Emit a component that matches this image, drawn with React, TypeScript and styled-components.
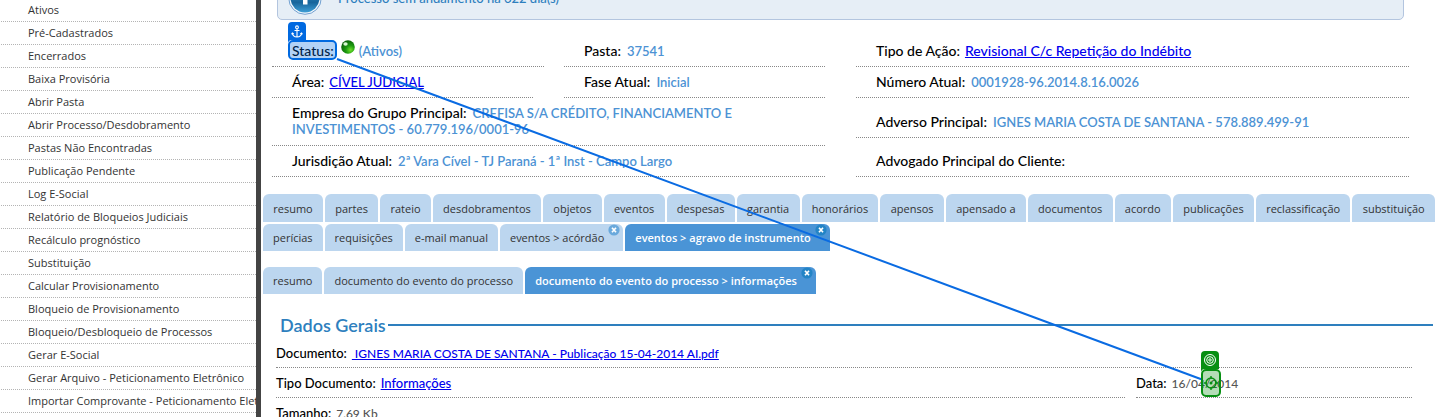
import React from 'react';
import styled, { createGlobalStyle } from 'styled-components';

const uiFont = '"Open Sans", "Noto Sans", sans-serif';
const bodyFont = 'Lato, "Open Sans", sans-serif';

const GlobalStyle = createGlobalStyle`
  * { box-sizing: border-box; }
  body { margin: 0; background: #fff; overflow: hidden; }
`;

const Page = styled.div`
  position: relative;
  display: flex;
  height: 100vh;
  overflow: hidden;
  font-family: ${bodyFont};
`;

const Sidebar = styled.nav`
  flex: 0 0 261px;
  border-right: 5px solid #444;
  overflow: hidden;
`;

const Menu = styled.ul`
  list-style: none;
  margin: -1px 0 0;
  padding: 0 0 0 1px;
`;

const MenuItem = styled.li`
  height: 23px;
  border-bottom: 1px dotted #b4b4b4;
`;

const MenuLink = styled.a`
  display: block;
  padding-left: 27px;
  font: 400 11px/22px ${uiFont};
  color: #333;
  white-space: nowrap;
  text-decoration: none;
`;

const Main = styled.main`
  flex: 1;
  min-width: 0;
`;

const Alert = styled.div`
  display: flex;
  align-items: center;
  gap: 16px;
  height: 44px;
  margin: -24px 36px 16px 16px;
  padding-left: 10px;
  background: #e6eef6;
  border: 1px solid #b3c5df;
  border-radius: 5px;
  font-size: 13px;
  font-weight: 500;
  line-height: 17px;
  color: #2e7fbe;
`;

const Summary = styled.section`
  display: grid;
  grid-template-columns: 1fr 1fr;
  column-gap: 31px;
  padding: 0 31px 0 11px;
  font-size: 14px;
  font-weight: 500;
  line-height: 17px;
`;

const Column = styled.div`
  display: flex;
  flex-direction: column;
`;

const Pair = styled.div<{ $wideFirst?: boolean }>`
  display: grid;
  grid-template-columns: ${p => (p.$wideFirst ? '272fr 261fr' : '1fr 1fr')};
  column-gap: ${p => (p.$wideFirst ? '20px' : '31px')};
`;

const Field = styled.div<{ $grow?: boolean }>`
  display: flex;
  flex: ${p => (p.$grow ? '1' : 'none')};
  flex-direction: column;
  justify-content: flex-end;
  padding: 6px 20px 7px;
  border-bottom: 1px dotted #888;
  color: #000;
`;

const Line = styled.div`
  display: flex;
  align-items: baseline;
  height: 17px;
  white-space: nowrap;
`;

const Value = styled.span<{ $flush?: boolean }>`
  margin-left: ${p => (p.$flush ? '0' : '6px')};
  font-size: 13px;
  font-weight: 600;
  color: #4c92d4;
`;

const Link = styled.a<{ $size?: number }>`
  margin-left: 5px;
  font-size: ${p => p.$size ?? 13}px;
  color: #00e;
  text-decoration: underline;
`;

const StatusDot = styled.svg`
  flex: none;
  align-self: flex-start;
  margin: -3px -3px 0 6px;
`;

const Tabs = styled.div<{ $fill?: boolean; $last?: boolean }>`
  display: flex;
  gap: 2px;
  height: ${p => (p.$fill ? '28px' : '27px')};
  margin: 0 5px ${p => (p.$last ? '16px' : '2px')} 2px;
  & > button { flex-grow: ${p => (p.$fill ? 1 : 0)}; }
`;

const TabArea = styled.div`
  padding-top: 17px;
`;

const Tab = styled.button<{ $active?: boolean; $closable?: boolean }>`
  position: relative;
  border: 0;
  border-radius: 6px 6px 0 0;
  padding: 0 ${p => (p.$closable ? '19px' : '10px')} 0 10px;
  background: ${p => (p.$active ? '#4a94d6' : '#bcd6ef')};
  color: ${p => (p.$active ? '#fff' : '#333')};
  font: ${p => (p.$active ? 600 : 500)} 11px/27px ${uiFont};
  white-space: nowrap;
`;

const CloseMark = styled.svg`
  position: absolute;
  top: 0;
  right: 3px;
`;

const SectionTitle = styled.h2`
  display: flex;
  align-items: center;
  gap: 2px;
  margin: 20px 7px 2px 19px;
  font-size: 18px;
  line-height: 22px;
  font-weight: 600;
  color: #2e7fbe;
  &::after {
    content: '';
    flex: 1;
    height: 2px;
    background: #2e7fbe;
  }
`;

const Details = styled.section`
  padding: 0 28px 0 15px;
  font-size: 13px;
  font-weight: 500;
  line-height: 17px;
`;

const DetailRow = styled.div`
  display: flex;
  gap: 11px;
`;

const Detail = styled.div<{ $narrow?: boolean }>`
  flex: ${p => (p.$narrow ? '0 0 276px' : '1')};
  height: 30px;
  padding: 7px 0 5px;
  border-bottom: 1px dotted #888;
  color: #000;
`;

const Muted = styled.span`
  margin-left: 5px;
  font-size: 12px;
  color: #555;
`;

const Overlay = styled.svg`
  position: absolute;
  top: 0;
  left: 0;
  pointer-events: none;
`;

const menu = [
  'Ativos', 'Pré-Cadastrados', 'Encerrados', 'Baixa Provisória', 'Abrir Pasta',
  'Abrir Processo/Desdobramento', 'Pastas Não Encontradas', 'Publicação Pendente',
  'Log E-Social', 'Relatório de Bloqueios Judiciais', 'Recálculo prognóstico',
  'Substituição', 'Calcular Provisionamento', 'Bloqueio de Provisionamento',
  'Bloqueio/Desbloqueio de Processos', 'Gerar E-Social',
  'Gerar Arquivo - Peticionamento Eletrônico',
  'Importar Comprovante - Peticionamento Eletrônico',
];

const mainTabs = [
  'resumo', 'partes', 'rateio', 'desdobramentos', 'objetos', 'eventos', 'despesas',
  'garantia', 'honorários', 'apensos', 'apensado a', 'documentos', 'acordo',
  'publicações', 'reclassificação', 'substituição',
];

function Close({ active }: { active?: boolean }) {
  return (
    <CloseMark width="12" height="12" viewBox="0 0 12 12" aria-hidden="true">
      <circle cx="6" cy="6" r="5.6" fill={active ? '#2384c6' : '#6aa9dc'} />
      <path d="M4 3.8 8 8.2M8 3.8 4 8.2" stroke="#fff" strokeWidth="1.7" />
    </CloseMark>
  );
}

function Connector() {
  return (
    <Overlay width="1440" height="417" viewBox="0 0 1440 417" aria-hidden="true">
      <path d="M337 59 1202 379.500" stroke="#0a6be2" strokeWidth="2" />
      <rect x="289" y="41" width="47" height="18" rx="4" fill="#0069e0" fillOpacity=".3" stroke="#0069e0" strokeWidth="2" />
      <path d="M288 44V26q0-4 4-4h10q4 0 4 4v14h-14q-4 0-4 4z" fill="#0069e0" />
      <g fill="none" stroke="#fff" strokeWidth="1.1">
        <circle cx="297" cy="27.300" r="1.400" />
        <path d="M297 29v8M294.500 30.500h5M292.300 33c.3 2.700 2 3.900 4.700 4 2.700-.1 4.400-1.300 4.700-4M291.500 34.300l.9-1.300 1.300 1M302.500 34.300l-.9-1.300-1.300 1" />
      </g>
      <rect x="1202" y="370" width="18" height="26" rx="4" fill="#078f12" fillOpacity=".3" stroke="#078f12" strokeWidth="2" />
      <path d="M1201 373v-18q0-4 4-4h10q4 0 4 4v14h-14q-4 0-4 4z" fill="#078f12" />
      <g fill="none" stroke="#fff" strokeWidth="1">
        <circle cx="1210" cy="360" r="5.500" />
        <circle cx="1210" cy="360" r="3.300" />
        <circle cx="1210" cy="360" r="1.200" />
      </g>
      <g fill="none" stroke="#078f12" strokeWidth="1.400">
        <circle cx="1211" cy="383" r="5" />
        <path d="M1211 376v3M1211 387v3M1204 383h3M1215 383h3" />
      </g>
      <circle cx="1211" cy="383" r="1.500" fill="#078f12" />
    </Overlay>
  );
}

export default function App() {
  return (
    <>
      <GlobalStyle />
      <Page>
        <Sidebar>
          <Menu>
            {menu.map(item => (
              <MenuItem key={item}><MenuLink href="#">{item}</MenuLink></MenuItem>
            ))}
          </Menu>
        </Sidebar>
        <Main>
          <Alert>
            <svg width="34" height="34" viewBox="0 0 34 34" aria-hidden="true">
              <defs>
                <linearGradient id="info" x1="0" y1="0" x2="0" y2="1">
                  <stop offset="0" stopColor="#4aa3d8" />
                  <stop offset=".65" stopColor="#17659b" />
                  <stop offset="1" stopColor="#3f9fd6" />
                </linearGradient>
              </defs>
              <circle cx="17" cy="17" r="16.300" fill="#f4f8fc" stroke="#6f9fd0" />
              <circle cx="17" cy="17" r="14.500" fill="url(#info)" />
              <path d="M13 14h6.500v9.500H15V16.500h-2z" fill="#fff" />
              <circle cx="17" cy="9" r="2.500" fill="#fff" />
            </svg>
            Processo sem andamento há 622 dia(s)
          </Alert>
          <Summary>
            <Column>
              <Pair $wideFirst>
                <Field>
                  <Line>
                    <span>Status:</span>
                    <StatusDot width="16" height="16" viewBox="0 0 16 16" aria-hidden="true">
                      <defs>
                        <radialGradient id="led" cx=".68" cy=".72" r=".75">
                          <stop offset="0" stopColor="#6fe02c" />
                          <stop offset=".45" stopColor="#1d9a10" />
                          <stop offset="1" stopColor="#0a5f08" />
                        </radialGradient>
                      </defs>
                      <circle cx="8" cy="8" r="6.800" fill="url(#led)" />
                      <ellipse cx="5.500" cy="5" rx="2.200" ry="1.700" fill="#d9f7d2" />
                    </StatusDot>
                    <Value>(Ativos)</Value>
                  </Line>
                </Field>
                <Field><Line>Pasta:<Value>37541</Value></Line></Field>
              </Pair>
              <Pair>
                <Field><Line>Área:<Link href="#">CÍVEL JUDICIAL</Link></Line></Field>
                <Field><Line>Fase Atual:<Value>Inicial</Value></Line></Field>
              </Pair>
              <Field>
                <Line>Empresa do Grupo Principal:<Value>CREFISA S/A CRÉDITO, FINANCIAMENTO E</Value></Line>
                <Line><Value $flush>INVESTIMENTOS - 60.779.196/0001-96</Value></Line>
              </Field>
              <Field><Line>Jurisdição Atual:<Value>2ª Vara Cível - TJ Paraná - 1ª Inst - Campo Largo</Value></Line></Field>
            </Column>
            <Column>
              <Field><Line>Tipo de Ação:<Link href="#" $size={14}>Revisional C/c Repetição do Indébito</Link></Line></Field>
              <Field><Line>Número Atual:<Value>0001928-96.2014.8.16.0026</Value></Line></Field>
              <Field $grow><Line>Adverso Principal:<Value>IGNES MARIA COSTA DE SANTANA - 578.889.499-91</Value></Line></Field>
              <Field $grow><Line>Advogado Principal do Cliente:</Line></Field>
            </Column>
          </Summary>
          <TabArea>
            <Tabs $fill>
              {mainTabs.map(name => <Tab key={name}>{name}</Tab>)}
            </Tabs>
            <Tabs $last>
              <Tab>perícias</Tab>
              <Tab>requisições</Tab>
              <Tab>e-mail manual</Tab>
              <Tab $closable>eventos &gt; acórdão<Close /></Tab>
              <Tab $closable $active>eventos &gt; agravo de instrumento<Close active /></Tab>
            </Tabs>
            <Tabs>
              <Tab>resumo</Tab>
              <Tab>documento do evento do processo</Tab>
              <Tab $closable $active>documento do evento do processo &gt; informações<Close active /></Tab>
            </Tabs>
          </TabArea>
          <SectionTitle>Dados Gerais</SectionTitle>
          <Details>
            <DetailRow>
              <Detail>Documento:<Link href="#" $size={12}>&nbsp;IGNES MARIA COSTA DE SANTANA - Publicação 15-04-2014 AI.pdf</Link></Detail>
            </DetailRow>
            <DetailRow>
              <Detail>Tipo Documento:<Link href="#">Informações</Link></Detail>
              <Detail $narrow>Data:<Muted>16/04/2014</Muted></Detail>
            </DetailRow>
            <DetailRow>
              <Detail>Tamanho:<Muted>7,69 Kb</Muted></Detail>
            </DetailRow>
          </Details>
        </Main>
        <Connector />
      </Page>
    </>
  );
}
